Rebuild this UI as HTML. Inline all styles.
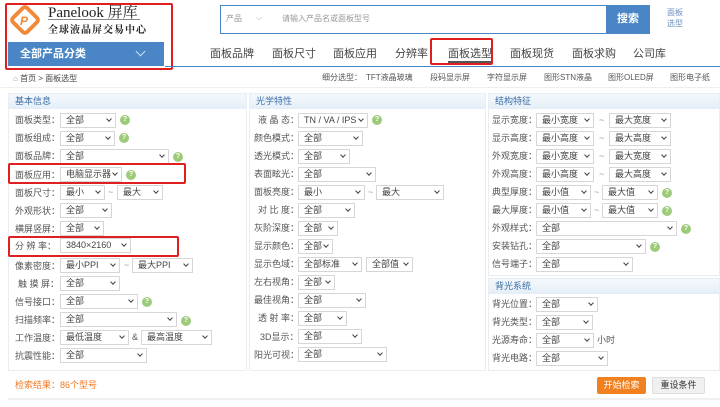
<!DOCTYPE html>
<html><head><meta charset="utf-8"><style>
*{margin:0;padding:0;box-sizing:border-box}
body{width:720px;height:407px;overflow:hidden;background:#fff;font-family:"Liberation Sans","Noto Sans CJK SC",sans-serif;font-size:9px;color:#555;position:relative}
.a{position:absolute;white-space:nowrap}
.l{position:absolute;font-size:9px;color:#555;line-height:14px;white-space:nowrap}
.s{position:absolute;height:15px;border:1px solid #d6d6d6;background:#fff;font-size:9px;color:#444;line-height:13px;padding-left:5px;padding-right:10px;white-space:nowrap;overflow:hidden}
.s:after{content:"";position:absolute;right:4px;top:3px;width:3px;height:3px;border-right:1.3px solid #444;border-bottom:1.3px solid #444;transform:rotate(45deg)}
.q{position:absolute;width:10px;height:10px;border-radius:50%;background:#9dcb7a;color:#fff;font-size:7px;line-height:10px;text-align:center;font-weight:bold}
.t{position:absolute;font-size:9px;color:#999}
.panel{position:absolute;top:93px;height:278px;border:1px solid #e8eef4;background:#fff}
.hd{position:absolute;left:0;right:0;top:0;height:15px;background:linear-gradient(#f4f8fc,#e4eef8);color:#3a6ea5;font-size:9px;line-height:15px;padding-left:6px}
.nav{position:absolute;top:45px;font-size:11px;color:#444}
.sub{position:absolute;top:72px;font-size:8px;color:#555}
.red{position:absolute;border:2px solid #e02020;border-radius:2px}
</style></head><body>
<svg class="a" style="left:10px;top:5px" width="30" height="30" viewBox="0 0 30 30"><rect x="5" y="5" width="20" height="20" rx="3" transform="rotate(45 15 15)" fill="none" stroke="#f08a3a" stroke-width="4"/><text x="10" y="20" font-size="12" font-style="italic" font-weight="bold" fill="#f08a3a" font-family="Liberation Sans">P</text></svg>
<div class="a" style="left:48px;top:1px;font-family:'Liberation Serif','Noto Serif CJK SC',serif;font-size:15px;color:#222">Panelook 屏库</div>
<div class="a" style="left:48px;top:19px;width:92px;border-top:1px solid #888"></div>
<div class="a" style="left:48px;top:21px;font-family:'Noto Serif CJK SC',serif;font-size:10px;color:#222;letter-spacing:1px;font-weight:bold">全球液晶屏交易中心</div>
<div class="a" style="left:8px;top:42px;width:156px;height:24px;background:#4a86c5;color:#fff;font-size:11px;font-weight:bold;line-height:24px;padding-left:12px">全部产品分类</div>
<div class="a" style="left:137px;top:48px;width:7px;height:7px;border-right:1.5px solid #cfe0f2;border-bottom:1.5px solid #cfe0f2;transform:rotate(45deg)"></div>
<div class="red" style="left:5px;top:3px;width:168px;height:67px"></div>
<div class="a" style="left:220px;top:5px;width:430px;height:29px;border:1px solid #4a86c5"></div>
<div class="a" style="left:226px;top:13px;color:#999;font-size:8px">产品</div>
<div class="a" style="left:256px;top:13px;color:#aaa;font-size:8px">⌵</div>
<div class="a" style="left:282px;top:13px;color:#999;font-size:8px">请输入产品名或面板型号</div>
<div class="a" style="left:606px;top:5px;width:44px;height:29px;background:#4a86c5;color:#fff;font-size:11px;font-weight:bold;text-align:center;line-height:29px">搜索</div>
<div class="a" style="left:667px;top:7px;color:#6a8fbf;font-size:8px;line-height:11px">面板<br>选型</div>
<div class="nav" style="left:210px">面板品牌</div>
<div class="nav" style="left:272px">面板尺寸</div>
<div class="nav" style="left:333px">面板应用</div>
<div class="nav" style="left:395px">分辨率</div>
<div class="nav" style="left:448px">面板选型</div>
<div class="a" style="left:448px;top:61px;width:44px;height:2px;background:#555"></div>
<div class="nav" style="left:510px">面板现货</div>
<div class="nav" style="left:572px">面板求购</div>
<div class="nav" style="left:633px">公司库</div>
<div class="red" style="left:430px;top:38px;width:63px;height:27px"></div>
<div class="a" style="left:165px;top:66px;width:555px;height:1px;background:#4a86c5"></div>
<div class="a" style="left:13px;top:73px;font-size:8px;color:#444"><span style="color:#f08a3a">⌂</span> 首页 &gt; 面板选型</div>
<div class="sub" style="left:322px">细分选型：</div>
<div class="sub" style="left:366px">TFT液晶玻璃</div>
<div class="sub" style="left:430px">段码显示屏</div>
<div class="sub" style="left:487px">字符显示屏</div>
<div class="sub" style="left:544px">图形STN液晶</div>
<div class="sub" style="left:608px">图形OLED屏</div>
<div class="sub" style="left:670px">图形电子纸</div>
<div class="a" style="left:0;top:87px;width:720px;height:1px;background:#eee"></div>
<div class="panel" style="left:8px;width:239px"><div class="hd">基本信息</div></div>
<div class="panel" style="left:249px;width:237px"><div class="hd">光学特性</div></div>
<div class="panel" style="left:488px;width:232px;height:183px"><div class="hd">结构特征</div></div>
<div class="panel" style="left:488px;top:278px;width:232px;height:93px"><div class="hd">背光系统</div></div>
<div class="l" style="left:15px;top:113px">面板类型：</div><div class="s" style="left:60px;top:113px;width:56px">全部</div><div class="q" style="left:120px;top:115px">?</div>
<div class="l" style="left:15px;top:131px">面板组成：</div><div class="s" style="left:60px;top:131px;width:55px">全部</div><div class="q" style="left:119px;top:133px">?</div>
<div class="l" style="left:15px;top:149px">面板品牌：</div><div class="s" style="left:60px;top:149px;width:109px">全部</div><div class="q" style="left:173px;top:152px">?</div>
<div class="l" style="left:15px;top:168px">面板应用：</div><div class="s" style="left:60px;top:167px;width:62px">电脑显示器</div><div class="q" style="left:126px;top:170px">?</div>
<div class="l" style="left:15px;top:186px">面板尺寸：</div><div class="s" style="left:60px;top:185px;width:45px">最小</div><div class="t" style="left:108px;top:187px">~</div><div class="s" style="left:117px;top:185px;width:46px">最大</div>
<div class="l" style="left:15px;top:204px">外观形状：</div><div class="s" style="left:60px;top:203px;width:52px">全部</div>
<div class="l" style="left:15px;top:222px">横屏竖屏：</div><div class="s" style="left:60px;top:221px;width:44px">全部</div>
<div class="l" style="left:15px;top:239px">分 辨 率：</div><div class="s" style="left:60px;top:238px;width:71px">3840×2160</div>
<div class="l" style="left:15px;top:259px">像素密度：</div><div class="s" style="left:60px;top:258px;width:60px">最小PPI</div><div class="t" style="left:124px;top:260px">~</div><div class="s" style="left:132px;top:258px;width:61px">最大PPI</div>
<div class="l" style="left:18px;top:277px">触 摸 屏：</div><div class="s" style="left:60px;top:276px;width:60px">全部</div>
<div class="l" style="left:15px;top:295px">信号接口：</div><div class="s" style="left:60px;top:294px;width:78px">全部</div><div class="q" style="left:142px;top:297px">?</div>
<div class="l" style="left:15px;top:313px">扫描频率：</div><div class="s" style="left:60px;top:312px;width:117px">全部</div><div class="q" style="left:181px;top:316px">?</div>
<div class="l" style="left:15px;top:331px">工作温度：</div><div class="s" style="left:60px;top:330px;width:69px">最低温度</div><div class="t" style="left:132px;top:332px;color:#555">&amp;</div><div class="s" style="left:141px;top:330px;width:71px">最高温度</div>
<div class="l" style="left:15px;top:349px">抗震性能：</div><div class="s" style="left:60px;top:348px;width:87px">全部</div>
<div class="red" style="left:8px;top:163px;width:178px;height:21px"></div>
<div class="red" style="left:8px;top:236px;width:171px;height:21px"></div>
<div class="l" style="left:258px;top:113px">液 晶 态：</div><div class="s" style="left:298px;top:113px;width:70px">TN / VA / IPS</div><div class="q" style="left:372px;top:115px">?</div>
<div class="l" style="left:254px;top:131px">颜色模式：</div><div class="s" style="left:298px;top:131px;width:65px">全部</div>
<div class="l" style="left:254px;top:149px">透光模式：</div><div class="s" style="left:298px;top:149px;width:52px">全部</div>
<div class="l" style="left:254px;top:167px">表面眩光：</div><div class="s" style="left:298px;top:167px;width:78px">全部</div>
<div class="l" style="left:254px;top:185px">面板亮度：</div><div class="s" style="left:298px;top:185px;width:67px">最小</div><div class="t" style="left:368px;top:187px">~</div><div class="s" style="left:376px;top:185px;width:68px">最大</div>
<div class="l" style="left:258px;top:203px">对 比 度：</div><div class="s" style="left:298px;top:203px;width:57px">全部</div>
<div class="l" style="left:254px;top:221px">灰阶深度：</div><div class="s" style="left:298px;top:221px;width:40px">全部</div>
<div class="l" style="left:254px;top:239px">显示颜色：</div><div class="s" style="left:298px;top:239px;width:35px">全部</div>
<div class="l" style="left:254px;top:257px">显示色域：</div><div class="s" style="left:298px;top:257px;width:64px">全部标准</div><div class="s" style="left:366px;top:257px;width:47px">全部值</div>
<div class="l" style="left:254px;top:275px">左右视角：</div><div class="s" style="left:298px;top:275px;width:37px">全部</div>
<div class="l" style="left:254px;top:293px">最佳视角：</div><div class="s" style="left:298px;top:293px;width:68px">全部</div>
<div class="l" style="left:258px;top:311px">透 射 率：</div><div class="s" style="left:298px;top:311px;width:49px">全部</div>
<div class="l" style="left:260px;top:330px">3D显示：</div><div class="s" style="left:298px;top:329px;width:64px">全部</div>
<div class="l" style="left:254px;top:348px">阳光可视：</div><div class="s" style="left:298px;top:347px;width:89px">全部</div>
<div class="l" style="left:492px;top:113px">显示宽度：</div><div class="s" style="left:536px;top:113px;width:58px">最小宽度</div><div class="t" style="left:599px;top:115px">~</div><div class="s" style="left:609px;top:113px;width:62px">最大宽度</div>
<div class="l" style="left:492px;top:131px">显示高度：</div><div class="s" style="left:536px;top:131px;width:58px">最小高度</div><div class="t" style="left:599px;top:133px">~</div><div class="s" style="left:609px;top:131px;width:62px">最大高度</div>
<div class="l" style="left:492px;top:149px">外观宽度：</div><div class="s" style="left:536px;top:149px;width:58px">最小宽度</div><div class="t" style="left:599px;top:151px">~</div><div class="s" style="left:609px;top:149px;width:62px">最大宽度</div>
<div class="l" style="left:492px;top:167px">外观高度：</div><div class="s" style="left:536px;top:167px;width:58px">最小高度</div><div class="t" style="left:599px;top:169px">~</div><div class="s" style="left:609px;top:167px;width:62px">最大高度</div>
<div class="l" style="left:492px;top:185px">典型厚度：</div><div class="s" style="left:536px;top:185px;width:55px">最小值</div><div class="t" style="left:594px;top:187px">~</div><div class="s" style="left:602px;top:185px;width:56px">最大值</div><div class="q" style="left:662px;top:188px">?</div>
<div class="l" style="left:492px;top:203px">最大厚度：</div><div class="s" style="left:536px;top:203px;width:55px">最小值</div><div class="t" style="left:594px;top:205px">~</div><div class="s" style="left:602px;top:203px;width:56px">最大值</div><div class="q" style="left:662px;top:206px">?</div>
<div class="l" style="left:492px;top:221px">外观样式：</div><div class="s" style="left:536px;top:221px;width:141px">全部</div><div class="q" style="left:681px;top:224px">?</div>
<div class="l" style="left:492px;top:239px">安装钻孔：</div><div class="s" style="left:536px;top:239px;width:110px">全部</div><div class="q" style="left:650px;top:242px">?</div>
<div class="l" style="left:492px;top:257px">信号端子：</div><div class="s" style="left:536px;top:257px;width:97px">全部</div>
<div class="l" style="left:492px;top:297px">背光位置：</div><div class="s" style="left:536px;top:297px;width:62px">全部</div>
<div class="l" style="left:492px;top:315px">背光类型：</div><div class="s" style="left:536px;top:315px;width:57px">全部</div>
<div class="l" style="left:492px;top:333px">光源寿命：</div><div class="s" style="left:536px;top:333px;width:58px">全部</div><div class="l" style="left:597px;top:333px">小时</div>
<div class="l" style="left:492px;top:351px">背光电路：</div><div class="s" style="left:536px;top:351px;width:72px">全部</div>
<div class="a" style="left:15px;top:378px;color:#f07a20;font-size:9px">检索结果：86个型号</div>
<div class="a" style="left:597px;top:377px;width:49px;height:17px;background:#f08020;border-radius:2px;color:#fff;font-size:9px;text-align:center;line-height:17px">开始检索</div>
<div class="a" style="left:652px;top:377px;width:53px;height:17px;background:#f0f0f0;border:1px solid #ddd;border-radius:2px;color:#333;font-size:9px;text-align:center;line-height:15px">重设条件</div>
<div class="a" style="left:8px;top:398px;width:712px;height:2px;background:#f0f0f0"></div>
</body></html>
